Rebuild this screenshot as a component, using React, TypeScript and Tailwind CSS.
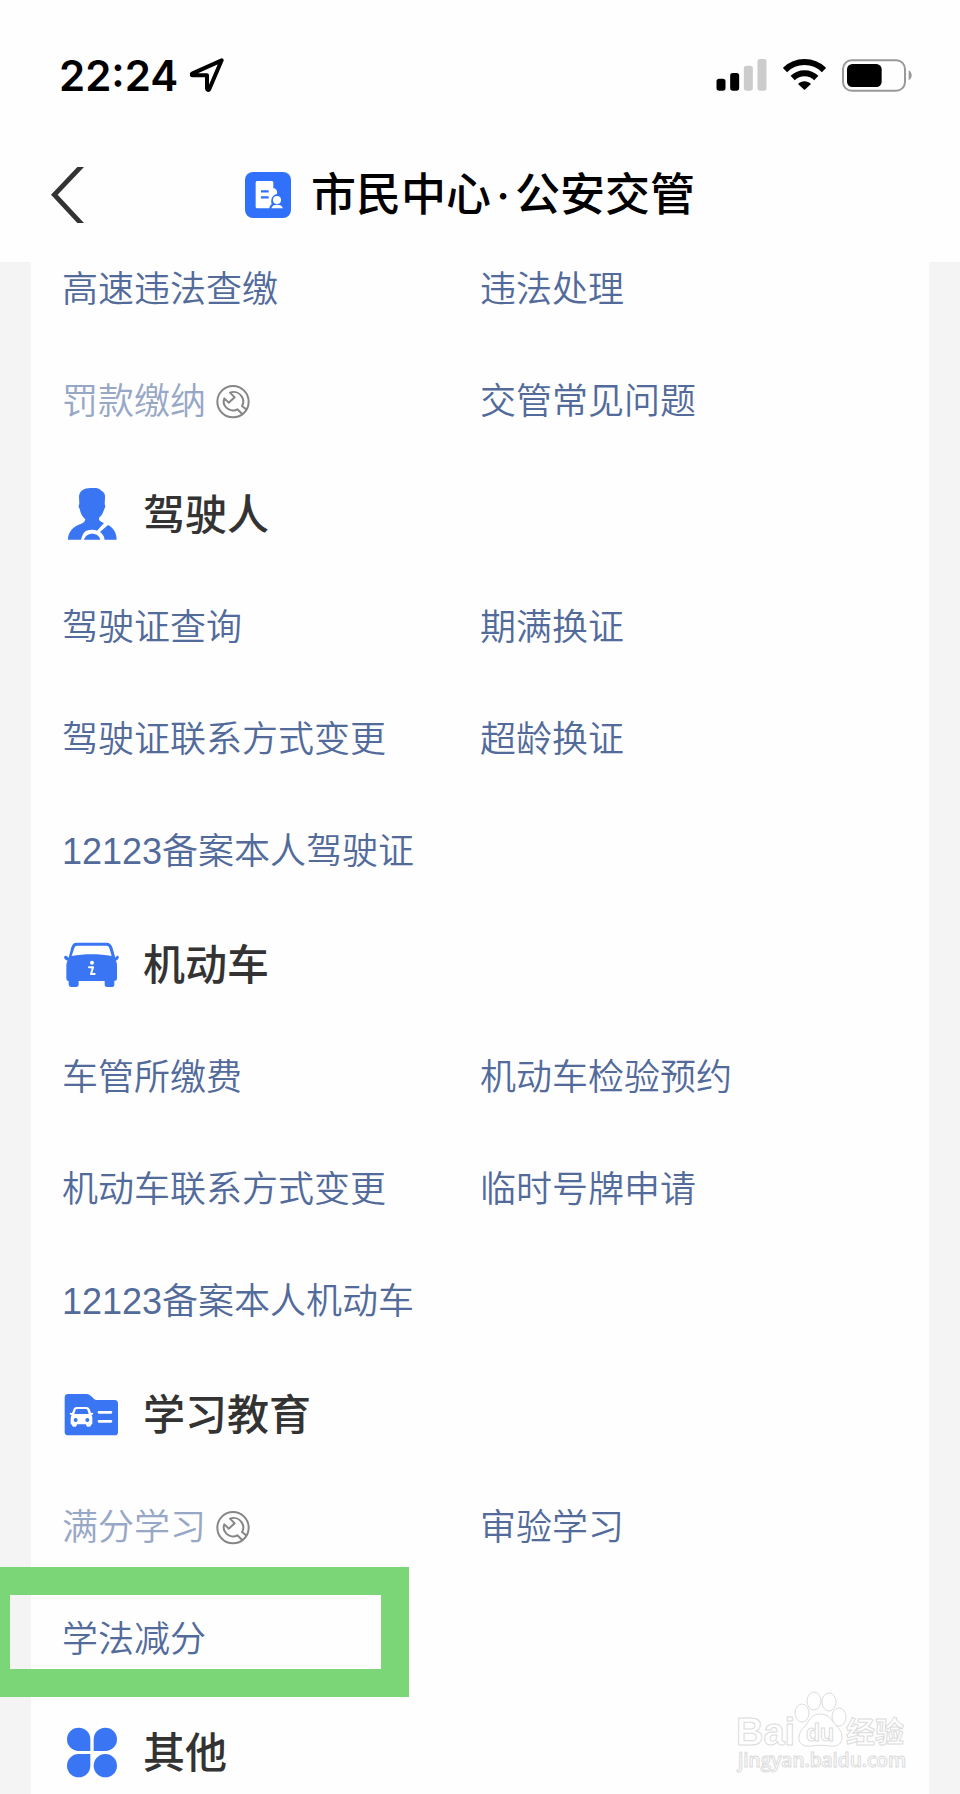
import type { ReactNode } from "react";

type Item = {
	label: string;
	disabled?: boolean;
	highlighted?: boolean;
};

type Section = {
	title?: string;
	icon?: ReactNode;
	items: Item[];
};

const DriverIcon = () => (
	<svg viewBox="0 0 180 180" className="size-[60px] fill-[#3a76f3]" aria-hidden="true">
		<path d="M51 46C51 27 66 18 86 18H103C110 19 115 23 119 27C127 30 130 38 129 48L128 67C131 69 130 77 127 80C124 92 118 102 111 107V112C112 118 119 121 126 123L105 146C97 142 83 142 73 146C65 150 60 160 57 173H18C17 151 35 132 56 126C63 123 69 120 70 112C61 104 56 95 53 80C49 76 49 69 52 66Z" />
		<path d="M138 129C154 137 164 152 164 173H128C126 162 121 154 114 150Z" />
		<path d="M66 173C69 161 80 155 91 155C102 155 112 161 115 173Z" />
	</svg>
);

const CarIcon = () => (
	<svg viewBox="0 0 180 180" className="size-[60px] fill-[#3a76f3]" aria-hidden="true">
		<path
			fillRule="evenodd"
			d="M43 32H134C143 32 148 37 151 46L160 77L164 72C168 69 173 75 169 80C167 84 163 85 161 86C165 91 165 96 165 103V139C165 145 162 147 157 147V158C157 163 154 165 149 165H136C130 165 128 162 128 157V147H50V157C50 163 47 165 42 165H28C23 165 20 162 20 157V147C15 147 13 144 13 139V103C13 96 14 90 17 86C12 85 9 83 7 79C4 74 10 69 15 73L20 77L28 46C31 37 35 32 43 32ZM46 41C41 41 39 43 37 48L29 72C66 65 112 65 149 72L142 48C140 43 138 41 133 41Z"
		/>
		<circle cx="90" cy="92" r="6" fill="#fff" />
		<path d="M81 106H93L87 126H98" fill="none" stroke="#fff" strokeWidth="6" strokeLinecap="round" strokeLinejoin="round" />
	</svg>
);

const StudyIcon = () => (
	<svg viewBox="0 0 180 180" className="size-[60px] fill-[#3a76f3]" aria-hidden="true">
		<path d="M18 36H74C80 36 84 39 88 43L97 52C100 54 103 54 107 54H158C165 54 168 58 168 65V150C168 157 165 160 158 160H19C12 160 8 157 8 150V47C8 40 11 36 18 36Z" />
		<path
			fill="#fff"
			fillRule="evenodd"
			d="M44 75H73C79 75 82 78 84 84L87 93L92 92C95 93 94 97 91 98L88 99C91 102 91 106 91 110V124C91 127 90 128 87 128V130C87 133 85 134 82 134H77C74 134 73 132 72 127H45C44 132 43 134 40 134H35C32 134 30 132 30 129V128C27 128 26 126 26 123V110C26 106 27 102 29 99L25 98C22 96 23 92 26 92L30 93L34 83C36 78 38 75 44 75ZM46 81C42 81 41 83 40 86L37 96H80L77 86C76 83 75 81 71 81ZM41 108A6 6 0 1 0 41 120A6 6 0 1 0 41 108ZM76 108A6 6 0 1 0 76 120A6 6 0 1 0 76 108Z"
		/>
		<path d="M111 91H147M111 118H147" stroke="#fff" strokeWidth="8" strokeLinecap="round" />
	</svg>
);

const OtherIcon = () => (
	<svg viewBox="0 0 180 180" className="size-[60px] fill-[#3a76f3]" aria-hidden="true">
		<path d="M85 93V59A35 35 0 1 0 50 93Z" />
		<path d="M95 93V59A35 35 0 1 1 130 93Z" />
		<path d="M85 102V137A35 35 0 1 1 50 102Z" />
		<circle cx="130" cy="137" r="35" />
	</svg>
);

const WrenchIcon = () => (
	<svg viewBox="0 0 102 102" className="size-[34px]" fill="none" stroke="#868686" strokeWidth="6" strokeLinejoin="round" aria-label="维护中">
		<circle cx="51" cy="50" r="47" />
		<path d="M81 89L64 73C54 79 40 77 31 68C23 60 21 50 25 40L38 53L56 37L42 23C55 18 69 22 77 34C83 43 83 55 78 63L93 75" />
	</svg>
);

const sections: Section[] = [
	{
		items: [
			{ label: "高速违法查缴" },
			{ label: "违法处理" },
			{ label: "罚款缴纳", disabled: true },
			{ label: "交管常见问题" },
		],
	},
	{
		title: "驾驶人",
		icon: <DriverIcon />,
		items: [
			{ label: "驾驶证查询" },
			{ label: "期满换证" },
			{ label: "驾驶证联系方式变更" },
			{ label: "超龄换证" },
			{ label: "12123备案本人驾驶证" },
		],
	},
	{
		title: "机动车",
		icon: <CarIcon />,
		items: [
			{ label: "车管所缴费" },
			{ label: "机动车检验预约" },
			{ label: "机动车联系方式变更" },
			{ label: "临时号牌申请" },
			{ label: "12123备案本人机动车" },
		],
	},
	{
		title: "学习教育",
		icon: <StudyIcon />,
		items: [
			{ label: "满分学习", disabled: true },
			{ label: "审验学习" },
			{ label: "学法减分", highlighted: true },
		],
	},
	{
		title: "其他",
		icon: <OtherIcon />,
		items: [],
	},
];

const StatusBar = () => (
	<div className="flex h-[150px] items-center justify-between pl-[59px] pr-12">
		<div className="flex items-center gap-3">
			<span className="pt-0.5 font-['Inter'] text-[42px] leading-none font-semibold text-black">22:24</span>
			<svg viewBox="0 0 102 102" className="size-[34px]" fill="none" stroke="#000" strokeWidth="12" strokeLinejoin="round" aria-hidden="true">
				<path d="M95 7L8 46C4 48 4 52 8 52H51V92C52 97 56 97 58 93Z" />
			</svg>
		</div>
		<div className="flex items-center gap-4">
			<svg viewBox="0 0 152 96" className="h-8 w-[51px]" aria-hidden="true">
				<rect x="1" y="59" width="27" height="36" rx="8" />
				<rect x="42" y="42" width="27" height="53" rx="8" />
				<rect x="83" y="20" width="27" height="75" rx="8" fill="#ccc" />
				<rect x="124" y="0" width="27" height="95" rx="8" fill="#ccc" />
			</svg>
			<svg viewBox="0 0 129 96" className="h-8 w-[43px]" fill="none" stroke="#000" strokeWidth="18" aria-hidden="true">
				<path d="M6 33A84 84 0 0 1 123 33" />
				<path d="M29 57A51 51 0 0 1 100 57" />
				<path d="M45 75C56 64 73 64 84 75L67 91Q64 94 62 91Z" fill="#000" stroke="none" />
			</svg>
			<svg viewBox="0 0 210 99" className="h-[33px] w-[70px]" aria-hidden="true">
				<rect x="3" y="4" width="186" height="91" rx="26" fill="none" stroke="#999" strokeWidth="6" />
				<rect x="15" y="15" width="104" height="69" rx="16" />
				<path d="M200 34C212 40 212 58 200 64Z" fill="#999" />
			</svg>
		</div>
	</div>
);

const TitleBar = () => (
	<div className="relative flex h-[90px] items-center justify-center">
		<button type="button" aria-label="返回" className="absolute left-[51px]">
			<svg viewBox="0 0 102 168" className="h-14 w-[34px]" aria-hidden="true">
				<path d="M79 0H99L20 83L99 168H79L0 83Z" fill="#333" />
			</svg>
		</button>
		<div className="mr-5 flex items-center gap-5">
			<svg viewBox="0 0 138 138" className="size-[46px]" aria-hidden="true">
				<rect width="138" height="138" rx="24" fill="#3170fa" />
				<path fill="#fff" d="M38 27H80C83 27 85 29 85 32V49C93 49 98 56 96 66C84 68 77 79 79 93C82 97 77 98 74 104L73 109H38C34 109 32 107 32 104V32C32 29 34 27 38 27Z" />
				<path d="M48 58H71M48 76H71" stroke="#3170fa" strokeWidth="7" />
				<circle cx="96" cy="84" r="12" fill="#fff" />
				<path d="M79 109C81 101 88 98 96 98C104 98 112 101 114 109Z" fill="#fff" />
			</svg>
			<h1 className="flex items-center text-[45px] leading-none font-medium text-black">
				市民中心
				<span className="flex w-6 justify-center font-['Inter'] font-medium">·</span>
				公安交管
			</h1>
		</div>
	</div>
);

const SectionBlock = ({ title, icon, items }: Section) => (
	<section>
		{title && (
			<h2 className="flex h-[114px] items-center gap-[21px] text-[42px] font-medium text-[#333]">
				{icon}
				<span className="pt-1.5">{title}</span>
			</h2>
		)}
		<ul className="grid grid-cols-2">
			{items.map(({ label, disabled, highlighted }) => (
				<li key={label} className="relative flex h-28 items-center pt-1.5">
					<a
						href="#"
						aria-disabled={disabled}
						className={`flex items-center gap-[10px] whitespace-nowrap ${disabled ? "text-[#97a7c6]" : "text-[#526b9b]"}`}
					>
						{label}
						{disabled && <WrenchIcon />}
					</a>
					{highlighted && (
						<div className="absolute -top-3.5 -bottom-1 left-[-62px] w-[409px] border-[28px] border-l-[10px] border-[#7bd677]" />
					)}
				</li>
			))}
		</ul>
	</section>
);

const Watermark = () => (
	<svg
		viewBox="0 0 176 90"
		className="absolute right-[50px] bottom-5 h-[90px] w-[176px] fill-white stroke-[#dcdcdc]"
		role="img"
		aria-label="Baidu 经验 jingyan.baidu.com"
	>
		<g className="font-['Liberation_Sans'] font-bold" strokeWidth="1">
			<text x="2" y="61" fontSize="38">
				Bai
			</text>
			<ellipse cx="68" cy="29" rx="7" ry="9" />
			<ellipse cx="80" cy="17" rx="7" ry="9" />
			<ellipse cx="95" cy="18" rx="7" ry="9" />
			<ellipse cx="105" cy="33" rx="7" ry="9" />
			<path d="M86 30C92 30 96 33 99 38C103 43 108 46 108 53C108 60 103 63 96 62C90 61 83 61 77 62C69 63 64 59 65 52C66 46 71 43 74 38C77 33 80 30 86 30Z" />
			<text x="72" y="57" fontSize="23">
				du
			</text>
		</g>
		<text x="112" y="59" fontSize="29" strokeWidth="1" className="font-['Noto_Sans_CJK_SC'] font-bold">
			经验
		</text>
		<text x="4" y="83" fontSize="19" strokeWidth="1" className="font-['Open_Sans'] font-semibold">
			jingyan.baidu.com
		</text>
	</svg>
);

const App = () => {
	return (
		<div className="relative flex h-screen flex-col overflow-hidden bg-[#f4f4f4] font-['Liberation_Sans','Noto_Sans_CJK_SC',sans-serif]">
			<header className="h-[262px] shrink-0 bg-[#fefefe]">
				<StatusBar />
				<TitleBar />
			</header>
			<main className="min-h-0 flex-1 overflow-hidden px-[31px] text-[36px] font-[350]">
				<div className="-mt-[31px] bg-[#fefefe] px-[31px]">
					{sections.map((section) => (
						<SectionBlock key={section.title ?? "top"} {...section} />
					))}
				</div>
			</main>
			<Watermark />
		</div>
	);
};

export default App;
